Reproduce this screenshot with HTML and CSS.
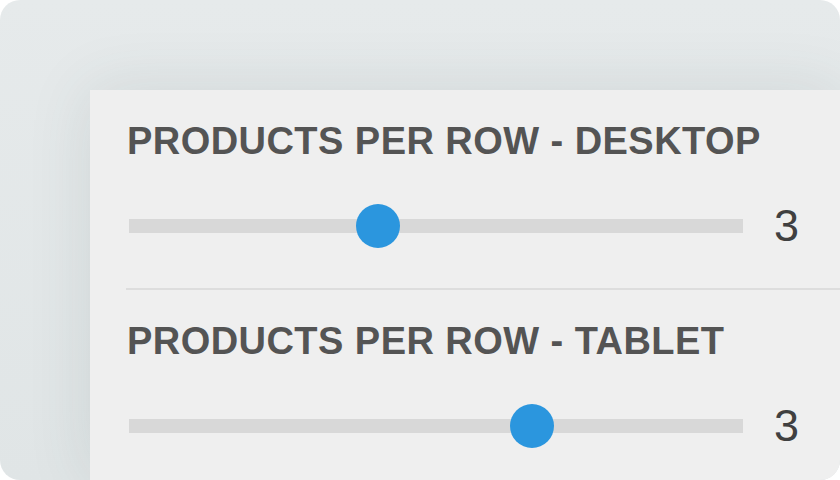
FILE: index.html
```html
<!DOCTYPE html>
<html>
<head>
<meta charset="utf-8">
<link rel="stylesheet" href="styles.css">
</head>
<body>
<div class="frame">
  <div class="panel">
    <div class="section">
      <div class="label">PRODUCTS PER ROW - DESKTOP</div>
      <div class="slider-row">
        <div class="track"><span class="thumb" style="left: 40.5%"></span></div>
        <div class="value">3</div>
      </div>
    </div>
    <div class="section">
      <div class="label">PRODUCTS PER ROW - TABLET</div>
      <div class="slider-row">
        <div class="track"><span class="thumb" style="left: 65.6%"></span></div>
        <div class="value">3</div>
      </div>
    </div>
  </div>
</div>
</body>
</html>
```

FILE: styles.css
```css
html, body {
  margin: 0;
  padding: 0;
  background: #ffffff;
}

.frame {
  width: 840px;
  height: 480px;
  box-sizing: border-box;
  border-radius: 20px;
  overflow: hidden;
  background: linear-gradient(180deg, #e6eaeb 0%, #e0e5e6 100%);
  padding: 90px 0 0 90px;
  display: flex;
}

.panel {
  flex: 1;
  background: #efefef;
  box-shadow: 0 0 60px rgba(60, 80, 85, 0.12);
  font-family: "Liberation Sans", Arial, sans-serif;
}

.section {
  margin-left: 36px;
  padding-top: 28px;
  padding-bottom: 40px;
  border-bottom: 2px solid #dddddd;
}

.label {
  font-size: 38px;
  line-height: 46px;
  font-weight: 700;
  letter-spacing: 0.45px;
  color: #545454;
  margin-left: 1px;
  margin-bottom: 40px;
  white-space: nowrap;
}

.slider-row {
  display: flex;
  align-items: center;
  height: 44px;
  padding-left: 3px;
}

.track {
  position: relative;
  flex: 0 0 614px;
  height: 14px;
  background: #d8d8d8;
}

.thumb {
  position: absolute;
  top: 50%;
  width: 44px;
  height: 44px;
  border-radius: 50%;
  background: #2b96de;
  transform: translate(-50%, -50%);
}

.value {
  margin-left: 31px;
  font-size: 45px;
  line-height: 44px;
  color: #404040;
}
```
